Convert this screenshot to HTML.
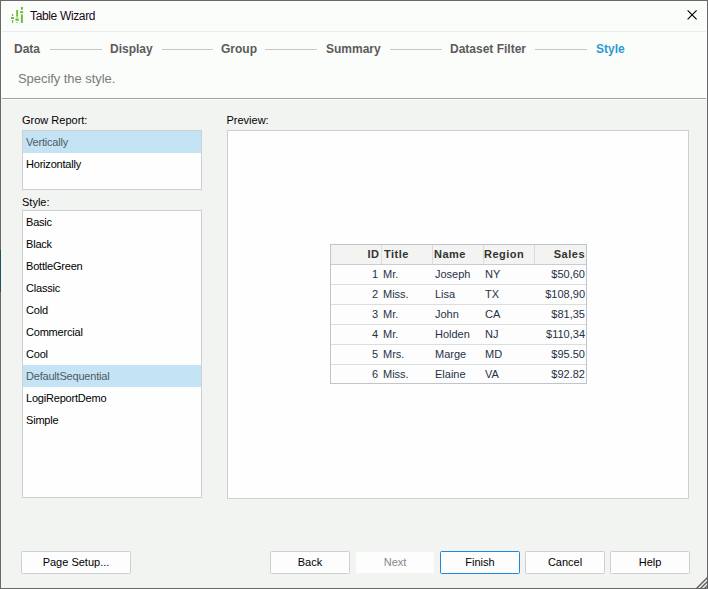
<!DOCTYPE html>
<html><head><meta charset="utf-8">
<style>
*{margin:0;padding:0;box-sizing:border-box}
html,body{width:708px;height:589px;overflow:hidden;background:#f2f4f1}
body{position:relative;font-family:"Liberation Sans",sans-serif;color:#000}
.a{position:absolute;white-space:nowrap}
#win{position:absolute;left:0;top:0;width:708px;height:589px;border:1px solid #686868;background:#f2f4f1}
#top{position:absolute;left:1px;top:1px;width:706px;height:97px;background:#fbfdfa}
#tsep{position:absolute;left:2px;top:31px;width:704px;height:1px;background:#ececec}
#hsep{position:absolute;left:2px;top:98px;width:704px;height:1px;background:#a0a0a0}
.tab{position:absolute;top:42px;font-size:12px;font-weight:bold;color:#5b5b5b;line-height:14px}
.ln{position:absolute;top:49px;height:1px;background:#c8c8c8}
.lbl{position:absolute;font-size:11px;line-height:13px;color:#000;margin-top:0.5px}
.box{position:absolute;background:#fdfefd;border:1px solid #cfced3}
.item{position:absolute;left:0;width:178px;height:22px;font-size:11px;line-height:22px;padding-left:3px;letter-spacing:-0.2px;color:#000}
.sel{background:#c4e3f4;color:#505a62}
.btn{position:absolute;top:551px;height:23px;border:1px solid #cfced3;border-radius:1.5px;background:#fdfdfd;font-size:11px;line-height:21px;text-align:center;color:#000}
#tbl{position:absolute;left:330px;top:244px;width:257px;height:140px;border:1px solid #bfc5ca;background:#fdfdfd;overflow:hidden}
#thd{position:absolute;left:0;top:0;width:255px;height:19px;background:#f3f3f2}
.cdiv{position:absolute;top:0;width:1px;height:19px;background:#dcdcdc}
.rl{position:absolute;left:0;width:255px;height:1px;background:#dcdddd}
.th{position:absolute;top:0;height:19px;line-height:19px;font-size:11px;font-weight:bold;color:#333;letter-spacing:0.5px;white-space:nowrap}
.td{position:absolute;height:19px;line-height:19px;font-size:11px;color:#1e3245;white-space:nowrap}
.r{text-align:right}.l{text-align:left}
</style></head><body>
<div id="win"></div>
<div id="top"></div>
<div style="position:absolute;left:0;top:250px;width:1px;height:42px;background:#24525c"></div>
<div id="tsep"></div>
<!-- icon -->
<svg class="a" style="left:0;top:0" width="30" height="30" viewBox="0 0 30 30">
  <g fill="#6bbf3c">
    <rect x="11.9" y="14" width="1.3" height="2"/>
    <rect x="11" y="17" width="3" height="2"/>
    <rect x="11.9" y="20" width="1.3" height="3"/>
    <rect x="16.2" y="10" width="1.8" height="6.5"/>
    <rect x="16.2" y="16.5" width="1.8" height="2" fill-opacity="0.5"/>
    <rect x="15.4" y="18.6" width="3.4" height="2.2"/>
    <rect x="16.2" y="22" width="1.8" height="1" fill-opacity="0.6"/>
    <rect x="20.9" y="7" width="2" height="2.8"/>
    <rect x="20.2" y="11.1" width="3" height="2.1"/>
    <rect x="20.9" y="14.4" width="2" height="8.5"/>
  </g>
</svg>
<div class="a" style="left:30px;top:8.5px;font-size:12px;letter-spacing:-0.35px;line-height:14px;color:#1a0a1a">Table Wizard</div>
<svg class="a" style="left:686px;top:9px" width="13" height="13" viewBox="0 0 13 13"><path d="M1.6 1.3L10.6 10.3M10.6 1.3L1.6 10.3" stroke="#000" stroke-width="1.15"/></svg>

<div class="tab" style="left:14px">Data</div>
<div class="ln" style="left:50px;width:52px"></div>
<div class="tab" style="left:110px">Display</div>
<div class="ln" style="left:162px;width:51px"></div>
<div class="tab" style="left:221px">Group</div>
<div class="ln" style="left:265px;width:52px"></div>
<div class="tab" style="left:326px">Summary</div>
<div class="ln" style="left:390px;width:52px"></div>
<div class="tab" style="left:450px">Dataset Filter</div>
<div class="ln" style="left:535px;width:52px"></div>
<div class="tab" style="left:596px;color:#2b9bd5">Style</div>

<div class="a" style="left:18px;top:71px;font-size:13px;letter-spacing:-0.06px;line-height:15px;color:#7a7a7a">Specify the style.</div>
<div id="hsep"></div><div style="position:absolute;left:2px;top:99px;width:704px;height:1px;background:#fdfdfd"></div>

<div class="lbl" style="left:22px;top:113px">Grow Report:</div>
<div class="box" style="left:22px;top:130px;width:180px;height:60px">
  <div class="item sel" style="top:0">Vertically</div>
  <div class="item" style="top:22px">Horizontally</div>
</div>
<div class="lbl" style="left:22px;top:195px">Style:</div>
<div class="box" style="left:22px;top:210px;width:180px;height:288px">
  <div class="item" style="top:0">Basic</div>
  <div class="item" style="top:22px">Black</div>
  <div class="item" style="top:44px">BottleGreen</div>
  <div class="item" style="top:66px">Classic</div>
  <div class="item" style="top:88px">Cold</div>
  <div class="item" style="top:110px">Commercial</div>
  <div class="item" style="top:132px">Cool</div>
  <div class="item sel" style="top:154px">DefaultSequential</div>
  <div class="item" style="top:176px">LogiReportDemo</div>
  <div class="item" style="top:198px">Simple</div>
</div>
<div class="lbl" style="left:226.5px;top:113px">Preview:</div>
<div class="box" style="left:227px;top:130px;width:462px;height:369px"></div>

<div id="tbl">
<div id="thd"></div>
<div class="cdiv" style="left:50px"></div>
<div class="cdiv" style="left:101px"></div>
<div class="cdiv" style="left:152px"></div>
<div class="cdiv" style="left:203px"></div>
<div class="rl" style="top:19px;background:#c9cdd1"></div>
<div class="rl" style="top:39px"></div>
<div class="rl" style="top:59px"></div>
<div class="rl" style="top:79px"></div>
<div class="rl" style="top:99px"></div>
<div class="rl" style="top:119px"></div>
<div class="th" style="right:206.5px">ID</div><div class="th" style="left:53px">Title</div><div class="th" style="left:103px">Name</div><div class="th" style="left:153px">Region</div><div class="th" style="right:1px">Sales</div>
<div class="td" style="top:20px;right:208px">1</div><div class="td" style="top:20px;left:52px">Mr.</div><div class="td" style="top:20px;left:104px">Joseph</div><div class="td" style="top:20px;left:154px">NY</div><div class="td" style="top:20px;right:1px">$50,60</div>
<div class="td" style="top:40px;right:208px">2</div><div class="td" style="top:40px;left:52px">Miss.</div><div class="td" style="top:40px;left:104px">Lisa</div><div class="td" style="top:40px;left:154px">TX</div><div class="td" style="top:40px;right:1px">$108,90</div>
<div class="td" style="top:60px;right:208px">3</div><div class="td" style="top:60px;left:52px">Mr.</div><div class="td" style="top:60px;left:104px">John</div><div class="td" style="top:60px;left:154px">CA</div><div class="td" style="top:60px;right:1px">$81,35</div>
<div class="td" style="top:80px;right:208px">4</div><div class="td" style="top:80px;left:52px">Mr.</div><div class="td" style="top:80px;left:104px">Holden</div><div class="td" style="top:80px;left:154px">NJ</div><div class="td" style="top:80px;right:1px">$110,34</div>
<div class="td" style="top:100px;right:208px">5</div><div class="td" style="top:100px;left:52px">Mrs.</div><div class="td" style="top:100px;left:104px">Marge</div><div class="td" style="top:100px;left:154px">MD</div><div class="td" style="top:100px;right:1px">$95.50</div>
<div class="td" style="top:120px;right:208px">6</div><div class="td" style="top:120px;left:52px">Miss.</div><div class="td" style="top:120px;left:104px">Elaine</div><div class="td" style="top:120px;left:154px">VA</div><div class="td" style="top:120px;right:1px">$92.82</div>
</div>

<div class="btn" style="left:21px;width:110px">Page Setup...</div>
<div class="btn" style="left:270px;width:80px">Back</div>
<div class="btn" style="left:356px;width:78px;border-color:#fcfdfc;background:#fcfdfc;color:#848890;border-radius:0;border-top-color:#f2f4f1;border-bottom-color:#f2f4f1">Next</div>
<div class="btn" style="left:440px;width:80px;border-color:#1a8ae0">Finish</div>
<div class="btn" style="left:525px;width:80px">Cancel</div>
<div class="btn" style="left:610px;width:80px">Help</div>

<svg class="a" style="left:688px;top:569px" width="20" height="20" viewBox="0 0 20 20">
  <path d="M8 20L20 8M12 20L20 12M16 20L20 16" stroke="#5a5a5a" stroke-width="1.4"/>
</svg>
</body></html>
